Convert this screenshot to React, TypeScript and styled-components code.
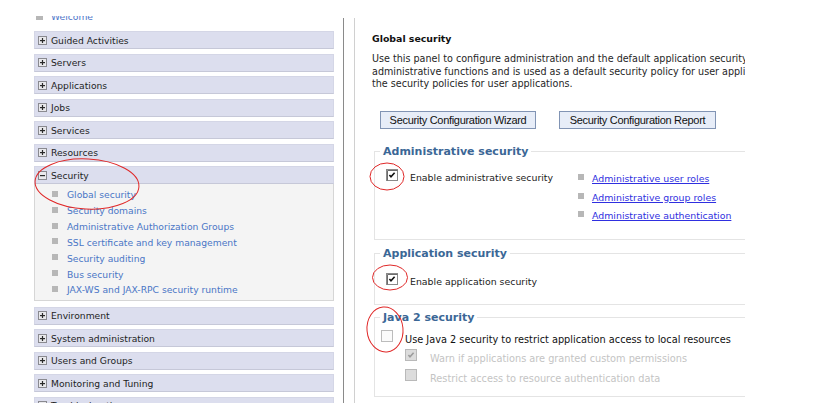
import React from "react";
import styled, { createGlobalStyle } from "styled-components";

const GlobalStyle = createGlobalStyle`
  html, body { margin: 0; padding: 0; background: #ffffff; }
  body {
    width: 817px;
    height: 417px;
    overflow: hidden;
    font-family: "DejaVu Sans", Verdana, sans-serif;
  }
  #root { position: relative; width: 817px; height: 417px; }
`;

const Page = styled.div`
  position: relative;
  display: flex;
  width: 817px;
  height: 417px;
`;

/* ---------- Left navigation ---------- */

const Sidebar = styled.aside`
  flex: none;
  width: 343px;
  box-sizing: border-box;
  padding: 16px 0 0 34px;
`;

const NavClip = styled.div`
  width: 300px;
  height: 387px;
  overflow: hidden;
`;

const NavList = styled.div`
  display: flex;
  flex-direction: column;
  gap: 4.5px;
  margin-top: -7.5px;
  font-size: 9.2px;
`;

const WelcomeRow = styled.div`
  height: 15px;
  margin-bottom: 3px;
  display: flex;
  align-items: center;
  gap: 8px;
  padding-left: 2px;
  color: #4c74c9;
  white-space: nowrap;
`;

const Bullet = styled.span<{ $size?: number; $lift?: number }>`
  flex: none;
  width: ${(p) => p.$size ?? 6}px;
  height: ${(p) => p.$size ?? 6}px;
  background: #b7b7b7;
  margin-top: ${(p) => -(p.$lift ?? 0)}px;
`;

const NavRow = styled.div`
  height: 18px;
  box-sizing: border-box;
  display: flex;
  align-items: center;
  gap: 4px;
  padding-left: 3px;
  background: #dcdeee;
  border: 1px solid #d4d6e6;
  border-bottom-color: #c6c8d8;
  color: #1e1e1e;
  white-space: nowrap;
`;

const ToggleBox = styled.svg`
  flex: none;
  width: 9px;
  height: 9px;
  display: block;
`;

const Toggle = ({ open }: { open?: boolean }) => (
  <ToggleBox viewBox="0 0 9 9">
    <rect x="0.5" y="0.5" width="8" height="8" fill="#e9e9ec" stroke="#8a8a90" />
    <rect x="2" y="4" width="5" height="1.2" fill="#2a2a2a" />
    {!open && <rect x="3.9" y="2" width="1.2" height="5" fill="#2a2a2a" />}
  </ToggleBox>
);

const SecurityGroup = styled.div`
  display: flex;
  flex-direction: column;
  margin-bottom: 1.5px;
`;

const SubPanel = styled.div`
  background: #f4f4f4;
  border: 1px solid #d6d6d6;
  border-top: none;
  padding: 3px 0 2px 0;
`;

const SubItem = styled.div`
  height: 15.83px;
  display: flex;
  align-items: center;
  gap: 9px;
  padding-left: 17px;
  color: #4a76c6;
  white-space: nowrap;
`;

/* ---------- Main content ---------- */

const Main = styled.main`
  flex: none;
  width: 474px;
  height: 385px;
  margin-top: 18px;
  box-sizing: border-box;
  border-left: 1px solid #8a8a8a;
  padding-left: 10px;
  display: flex;
`;

const Content = styled.div`
  width: 391px;
  height: 100%;
  box-sizing: border-box;
  border-left: 1px solid #d0d0d0;
  overflow: hidden;
  padding: 14.5px 0 0 17px;
  display: flex;
  flex-direction: column;
  font-size: 9.4px;
  color: #222;
`;

const Title = styled.div`
  font-weight: bold;
  font-size: 9.4px;
  line-height: 12px;
  color: #111;
  white-space: nowrap;
`;

const Description = styled.div`
  margin-top: 8.5px;
  font-size: 9.6px;
  line-height: 12.5px;
  color: #262626;
  white-space: nowrap;
`;

const ButtonRow = styled.div`
  display: flex;
  gap: 23px;
  margin: 20.5px 0 0 8px;
`;

const Button = styled.button<{ $w: number }>`
  flex: none;
  width: ${(p) => p.$w}px;
  height: 18px;
  padding: 0;
  box-sizing: border-box;
  background: #e7edf8;
  border: 1px solid #8194b4;
  border-radius: 0;
  font-family: "Liberation Sans", Arial, sans-serif;
  font-size: 11px;
  letter-spacing: -0.3px;
  color: #111;
  white-space: nowrap;
`;

const Group = styled.fieldset<{ $mt: number }>`
  margin: ${(p) => p.$mt}px 0 0 2px;
  padding: 0;
  min-width: 0;
  width: 520px;
  box-sizing: border-box;
  border: 1px solid #e4e4e4;
`;

const Legend = styled.legend`
  margin-left: 5px;
  padding: 0 3px;
  font-size: 11px;
  line-height: 14px;
  font-weight: bold;
  color: #3b6796;
  white-space: nowrap;
`;

const AdminBody = styled.div`
  display: flex;
  align-items: flex-start;
  padding: 10.75px 0 14px 11px;
`;

const CheckLine = styled.label<{ $w?: number; $indent?: number; $lh?: number; $gap?: number }>`
  display: flex;
  align-items: flex-start;
  gap: ${(p) => p.$gap ?? 12}px;
  flex: none;
  ${(p) => (p.$w ? `width: ${p.$w}px;` : "")}
  padding-left: ${(p) => p.$indent ?? 0}px;
  line-height: ${(p) => p.$lh ?? 18.5}px;
  white-space: nowrap;
`;

const LabelText = styled.span<{ $disabled?: boolean; $strong?: boolean }>`
  color: ${(p) => (p.$disabled ? "#c4c4c4" : p.$strong ? "#111" : "#222")};
`;

const LinkList = styled.div`
  display: flex;
  flex-direction: column;
`;

const LinkItem = styled.div`
  height: 18.5px;
  display: flex;
  align-items: center;
  gap: 8px;
  white-space: nowrap;
`;

const Link = styled.a`
  color: #2f2fe0;
  text-decoration: underline;
  cursor: pointer;
`;

const SimpleBody = styled.div<{ $pt: number; $pb: number; $pl: number; $fs?: number }>`
  display: flex;
  flex-direction: column;
  padding: ${(p) => p.$pt}px 0 ${(p) => p.$pb}px ${(p) => p.$pl}px;
  ${(p) => (p.$fs ? `font-size: ${p.$fs}px;` : "")}
`;

const BoxSvg = styled.svg`
  flex: none;
  display: block;
  width: 12px;
  height: 12px;
`;

type BoxKind = "checked" | "empty" | "disabledChecked" | "disabledEmpty";

const Check = ({ kind }: { kind: BoxKind }) => {
  const disabled = kind === "disabledChecked" || kind === "disabledEmpty";
  const checked = kind === "checked" || kind === "disabledChecked";
  const fill = disabled ? "#dcdcdc" : kind === "empty" ? "#fbfbfb" : "#ffffff";
  const stroke = disabled ? "#b9b9b9" : kind === "empty" ? "#bcbcbc" : "#8a8a8a";
  return (
    <BoxSvg viewBox="0 0 12 12">
      <rect x="0.5" y="0.5" width="11" height="11" fill={fill} stroke={stroke} />
      {kind === "checked" && (
        <path d="M1 1 H11 M1 1 V11" stroke="#6c6c6c" strokeWidth="1" fill="none" transform="translate(0.5 0.5)" />
      )}
      {checked && (
        <polyline
          points="3.4,6 5,7.8 8.6,3.8"
          fill="none"
          stroke={disabled ? "#9c9c9c" : "#111"}
          strokeWidth="1.6"
        />
      )}
    </BoxSvg>
  );
};

const Overlay = styled.svg`
  position: absolute;
  left: 0;
  top: 0;
  width: 817px;
  height: 417px;
  pointer-events: none;
`;

const navTop = ["Guided Activities", "Servers", "Applications", "Jobs", "Services", "Resources"];
const securityItems = [
  "Global security",
  "Security domains",
  "Administrative Authorization Groups",
  "SSL certificate and key management",
  "Security auditing",
  "Bus security",
  "JAX-WS and JAX-RPC security runtime",
];
const navBottom = [
  "Environment",
  "System administration",
  "Users and Groups",
  "Monitoring and Tuning",
  "Troubleshooting",
];

const descLines = [
  "Use this panel to configure administration and the default application security policy. This security configuration applies to the security policy for all",
  "administrative functions and is used as a default security policy for user applications. Security domains can be defined to override and customize",
  "the security policies for user applications.",
];

const adminLinks = [
  "Administrative user roles",
  "Administrative group roles",
  "Administrative authentication",
];

export default function App() {
  return (
    <>
      <GlobalStyle />
      <Page>
        <Sidebar>
          <NavClip>
            <NavList>
              <WelcomeRow>
                <Bullet $size={7} />
                <span>Welcome</span>
              </WelcomeRow>
              {navTop.map((t) => (
                <NavRow key={t}>
                  <Toggle />
                  <span>{t}</span>
                </NavRow>
              ))}
              <SecurityGroup>
                <NavRow>
                  <Toggle open />
                  <span>Security</span>
                </NavRow>
                <SubPanel>
                  {securityItems.map((t) => (
                    <SubItem key={t}>
                      <Bullet $lift={2} />
                      <span>{t}</span>
                    </SubItem>
                  ))}
                </SubPanel>
              </SecurityGroup>
              {navBottom.map((t) => (
                <NavRow key={t}>
                  <Toggle />
                  <span>{t}</span>
                </NavRow>
              ))}
            </NavList>
          </NavClip>
        </Sidebar>

        <Main>
          <Content>
            <Title>Global security</Title>
            <Description>
              {descLines.map((l) => (
                <div key={l}>{l}</div>
              ))}
            </Description>
            <ButtonRow>
              <Button $w={156}>Security Configuration Wizard</Button>
              <Button $w={157}>Security Configuration Report</Button>
            </ButtonRow>

            <Group $mt={15.5}>
              <Legend>Administrative security</Legend>
              <AdminBody>
                <CheckLine $w={192}>
                  <Check kind="checked" />
                  <LabelText>Enable administrative security</LabelText>
                </CheckLine>
                <LinkList>
                  {adminLinks.map((l) => (
                    <LinkItem key={l}>
                      <Bullet $lift={3} />
                      <Link>{l}</Link>
                    </LinkItem>
                  ))}
                </LinkList>
              </AdminBody>
            </Group>

            <Group $mt={7}>
              <Legend>Application security</Legend>
              <SimpleBody $pt={11.75} $pb={12.75} $pl={11}>
                <CheckLine>
                  <Check kind="checked" />
                  <LabelText>Enable application security</LabelText>
                </CheckLine>
              </SimpleBody>
            </Group>

            <Group $mt={6}>
              <Legend>Java 2 security</Legend>
              <SimpleBody $pt={5} $pb={7.5} $pl={6} $fs={9.75}>
                <CheckLine $lh={19.5}>
                  <Check kind="empty" />
                  <LabelText $strong>Use Java 2 security to restrict application access to local resources</LabelText>
                </CheckLine>
                <CheckLine $lh={19.5} $indent={24} $gap={13}>
                  <Check kind="disabledChecked" />
                  <LabelText $disabled>Warn if applications are granted custom permissions</LabelText>
                </CheckLine>
                <CheckLine $lh={19.5} $indent={24} $gap={13}>
                  <Check kind="disabledEmpty" />
                  <LabelText $disabled>Restrict access to resource authentication data</LabelText>
                </CheckLine>
              </SimpleBody>
            </Group>
          </Content>
        </Main>

        <Overlay viewBox="0 0 817 417">
          <g fill="none" stroke="#e02828" strokeWidth="1">
            <ellipse cx="87" cy="184" rx="52" ry="25" transform="rotate(3 87 184)" />
            <ellipse cx="387" cy="176.5" rx="17" ry="13.5" />
            <ellipse cx="390" cy="277.5" rx="17.5" ry="12.5" />
            <ellipse cx="385" cy="329.5" rx="18" ry="22.5" transform="rotate(-5 385 329.5)" />
          </g>
        </Overlay>
      </Page>
    </>
  );
}
